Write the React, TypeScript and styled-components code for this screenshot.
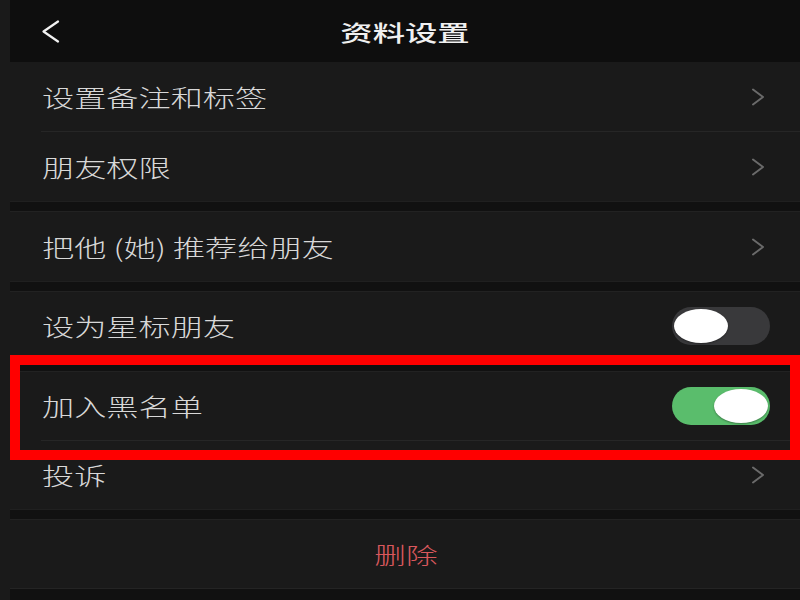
import React from "react";
import styled, { createGlobalStyle } from "styled-components";

const GlobalStyle = createGlobalStyle`
  html, body {
    margin: 0;
    padding: 0;
    background: #1a1a1a;
  }
  body {
    font-family: "Noto Sans CJK SC", "Noto Sans", sans-serif;
  }
`;

const Page = styled.div`
  position: relative;
  width: 800px;
  height: 600px;
  overflow: hidden;
  box-sizing: border-box;
  padding-left: 10px;
  background: #1a1a1a;
  display: flex;
  flex-direction: column;
`;

const Header = styled.header`
  height: 62px;
  flex: none;
  background: #0e0e0e;
  display: grid;
  grid-template-columns: 1fr auto 1fr;
  align-items: center;
`;

const BackButton = styled.button`
  justify-self: start;
  margin-left: 31px;
  padding: 0;
  border: none;
  background: transparent;
  display: flex;
  align-items: center;
  cursor: pointer;
`;

const Title = styled.h1`
  margin: 0;
  font-size: 22px;
  font-weight: 500;
  color: #f0f0f0;
  transform: scaleX(1.47);
  transform-origin: center;
  letter-spacing: 0;
`;

const Group = styled.section`
  flex: none;
  background: #1a1a1a;
  display: flex;
  flex-direction: column;
`;

const Gap = styled.div<{ $h?: number }>`
  flex: none;
  height: ${(p) => p.$h ?? 11}px;
  box-sizing: border-box;
  background: #111111;
  border-top: 1px solid #202020;
  border-bottom: 1px solid #222222;
`;

const Row = styled.div<{ $h?: number; $center?: boolean }>`
  height: ${(p) => p.$h ?? 69}px;
  box-sizing: border-box;
  display: flex;
  align-items: center;
  justify-content: ${(p) => (p.$center ? "center" : "space-between")};
  padding: 0 30px 0 32px;
`;

const Divider = styled.div`
  height: 1px;
  margin-left: 31px;
  background: #262626;
`;

const Label = styled.span`
  font-size: 24px;
  font-weight: 300;
  line-height: 1;
  color: #d8d8d8;
  transform: scaleX(1.34);
  transform-origin: left center;
  white-space: nowrap;
`;

const DangerLabel = styled.span`
  font-size: 23px;
  font-weight: 300;
  line-height: 1;
  color: #d9585d;
  transform: scaleX(1.38);
  transform-origin: center;
`;

const ChevronWrap = styled.span`
  display: flex;
  align-items: center;
  margin-right: 5px;
`;

const Track = styled.div<{ $on: boolean }>`
  width: 98px;
  height: 38px;
  box-sizing: border-box;
  border-radius: 19px;
  padding: 2px;
  background: ${(p) => (p.$on ? "#5abd6c" : "#39393b")};
  display: flex;
  align-items: center;
  justify-content: ${(p) => (p.$on ? "flex-end" : "flex-start")};
`;

const Knob = styled.div`
  width: 54px;
  height: 34px;
  border-radius: 50%;
  background: #ffffff;
  box-shadow: 0 1px 2px rgba(0, 0, 0, 0.35);
`;

const Footer = styled.div`
  flex: 1;
  background: #111111;
  border-top: 1px solid #242424;
`;

const Highlight = styled.div`
  position: absolute;
  left: 10px;
  top: 355px;
  width: 790px;
  height: 105px;
  box-sizing: border-box;
  border: 10px solid #ff0000;
  pointer-events: none;
`;

const Chevron = () => (
  <ChevronWrap>
    <svg width="14" height="18" viewBox="0 0 14 18" fill="none">
      <polyline
        points="2,1.5 12,9 2,16.5"
        stroke="#6a6a6a"
        strokeWidth="2"
        strokeLinecap="round"
        strokeLinejoin="round"
      />
    </svg>
  </ChevronWrap>
);

const Switch = ({ on }: { on: boolean }) => (
  <Track $on={on}>
    <Knob />
  </Track>
);

export default function App() {
  return (
    <>
      <GlobalStyle />
      <Page>
        <Header>
          <BackButton aria-label="返回">
            <svg width="19" height="23" viewBox="0 0 19 23" fill="none">
              <polyline
                points="17,1.5 2.5,11.5 17,21.5"
                stroke="#f2f2f2"
                strokeWidth="2.2"
                strokeLinecap="round"
                strokeLinejoin="round"
              />
            </svg>
          </BackButton>
          <Title>资料设置</Title>
          <span />
        </Header>

        <Group>
          <Row>
            <Label>设置备注和标签</Label>
            <Chevron />
          </Row>
          <Divider />
          <Row>
            <Label>朋友权限</Label>
            <Chevron />
          </Row>
        </Group>
        <Gap />
        <Group>
          <Row>
            <Label>把他 (她) 推荐给朋友</Label>
            <Chevron />
          </Row>
        </Group>
        <Gap />
        <Group>
          <Row $h={68}>
            <Label>设为星标朋友</Label>
            <Switch on={false} />
          </Row>
        </Group>
        <Gap $h={12} />
        <Group>
          <Row $h={68}>
            <Label>加入黑名单</Label>
            <Switch on={true} />
          </Row>
          <Divider />
          <Row $h={68}>
            <Label>投诉</Label>
            <Chevron />
          </Row>
        </Group>
        <Gap />
        <Group>
          <Row $h={68} $center>
            <DangerLabel>删除</DangerLabel>
          </Row>
        </Group>
        <Footer />
        <Highlight />
      </Page>
    </>
  );
}
